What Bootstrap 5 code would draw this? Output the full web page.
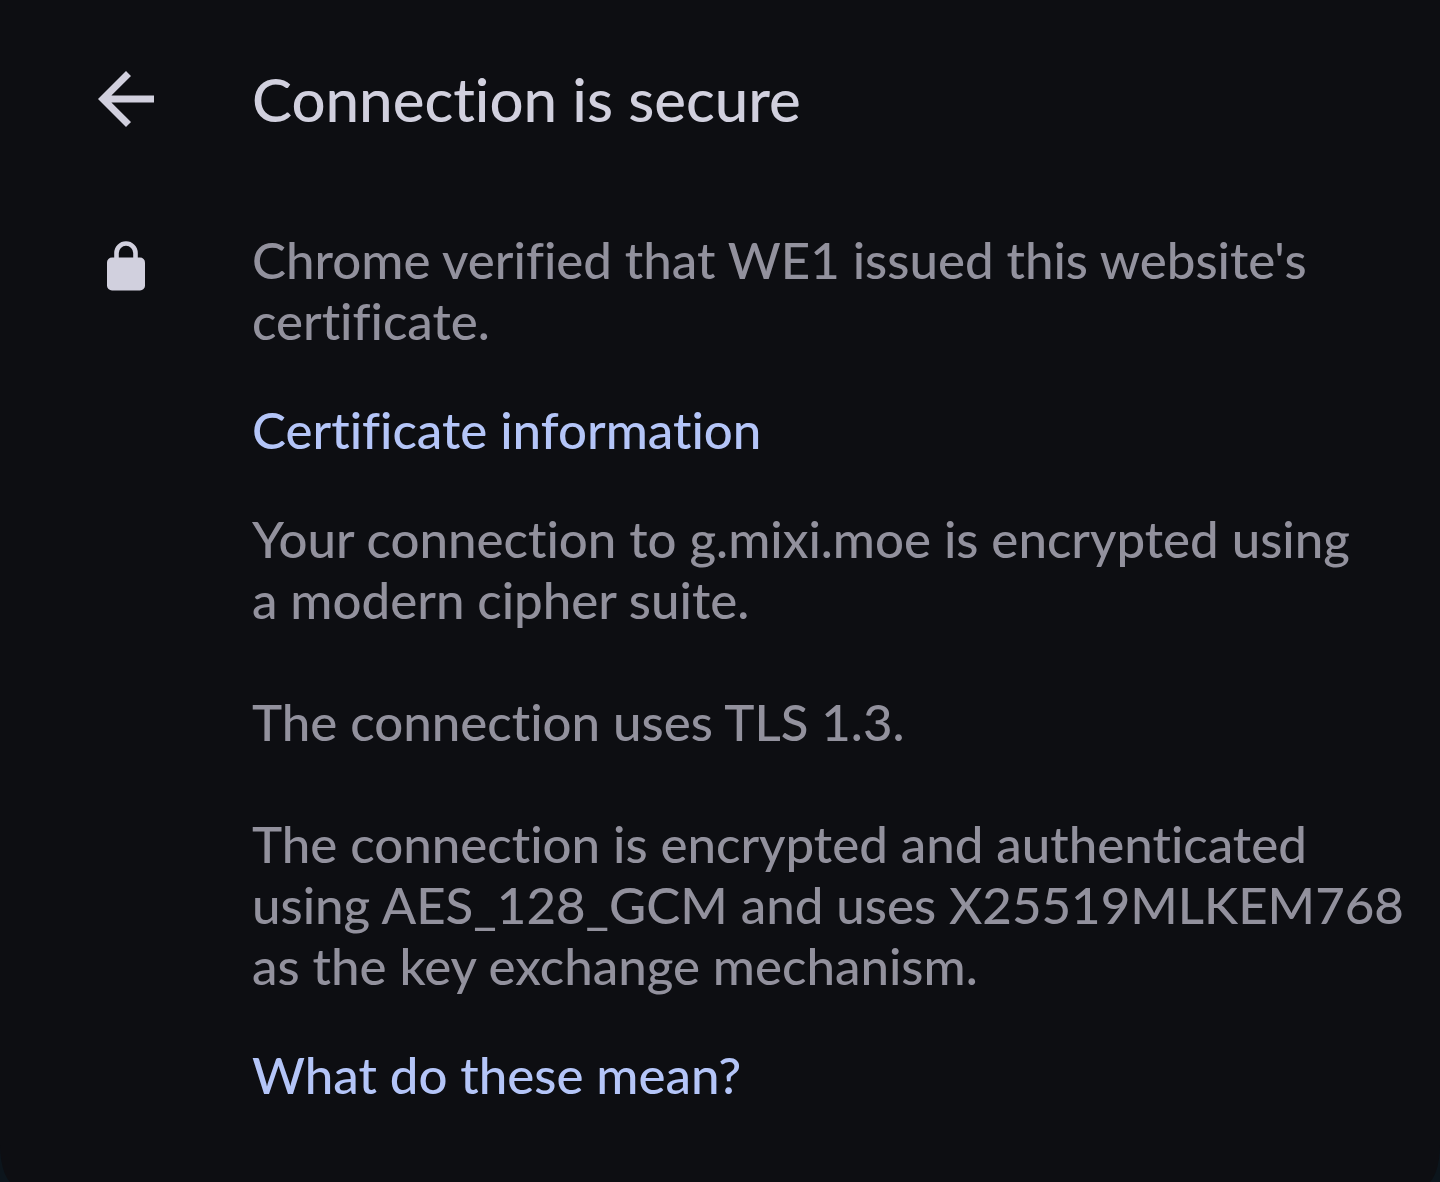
<!DOCTYPE html>
<html lang="en">
<head>
<meta charset="utf-8">
<meta name="viewport" content="width=device-width, initial-scale=1">
<title>Connection is secure</title>
<link href="https://cdn.jsdelivr.net/npm/bootstrap@5.3.0/dist/css/bootstrap.min.css" rel="stylesheet">
<style>
  body { background: #0c151c; font-family: Lato, "Open Sans", sans-serif; font-weight: 500; font-variant-ligatures: none; }
  .sheet { background: #0d0e12; color: #92919d; border-radius: 0 0 16px 16px / 0 0 40px 40px; padding: 57px 32px 80px 84px; }
  .lead-col { width: 84px; margin-right: 84px; }
  .back-btn { color: #d1d0de; line-height: 1; }
  .sheet-title { color: #d1d0de; font-size: 60px; font-weight: 500; line-height: 84px; }
  .sheet-head { margin-bottom: 88px; }
  .details { font-size: 51px; line-height: 61px; gap: 48px; }
  .details p + p { margin-top: 61px; }
  .details a { color: #b4c5f8; }
  .lock-icon { margin-top: 12px; }
</style>
</head>
<body>
<main class="sheet min-vh-100">
  <header class="sheet-head d-flex align-items-center">
    <button type="button" class="back-btn lead-col btn p-0 border-0 flex-shrink-0" aria-label="Back">
      <svg class="d-block" width="84" height="84" viewBox="0 0 24 24" fill="currentColor" aria-hidden="true"><path d="M20 11H7.83l5.6-5.6L12 4l-8 8 8 8 1.430-1.430L7.830 13H20z"/></svg>
    </button>
    <h1 class="sheet-title mb-0">Connection is secure</h1>
  </header>
  <section class="d-flex align-items-start">
    <div class="lead-col d-flex justify-content-center flex-shrink-0">
      <svg class="lock-icon" width="38" height="50" viewBox="0 0 38 50" fill="none" aria-hidden="true"><path d="M9.5 19v-7a9.500 9.500 0 0 1 19 0v7" stroke="#d1d0de" stroke-width="4.600"/><rect y="16.500" width="38" height="33" rx="5" fill="#d1d0de"/></svg>
    </div>
    <div class="details d-flex flex-column align-items-start">
      <p class="mb-0">Chrome verified that WE1 issued this website's certificate.</p>
      <a href="#certificate" class="text-decoration-none">Certificate information</a>
      <div>
        <p class="mb-0">Your connection to g.mixi.moe is encrypted using a&nbsp;modern cipher suite.</p>
        <p class="mb-0">The connection uses TLS 1.3.</p>
        <p class="mb-0">The connection is encrypted and authenticated using AES_128_GCM and uses X25519MLKEM768 as the key exchange mechanism.</p>
      </div>
      <a href="#help" class="text-decoration-none">What do these mean?</a>
    </div>
  </section>
</main>
<script src="https://cdn.jsdelivr.net/npm/bootstrap@5.3.0/dist/js/bootstrap.bundle.min.js"></script>
</body>
</html>
